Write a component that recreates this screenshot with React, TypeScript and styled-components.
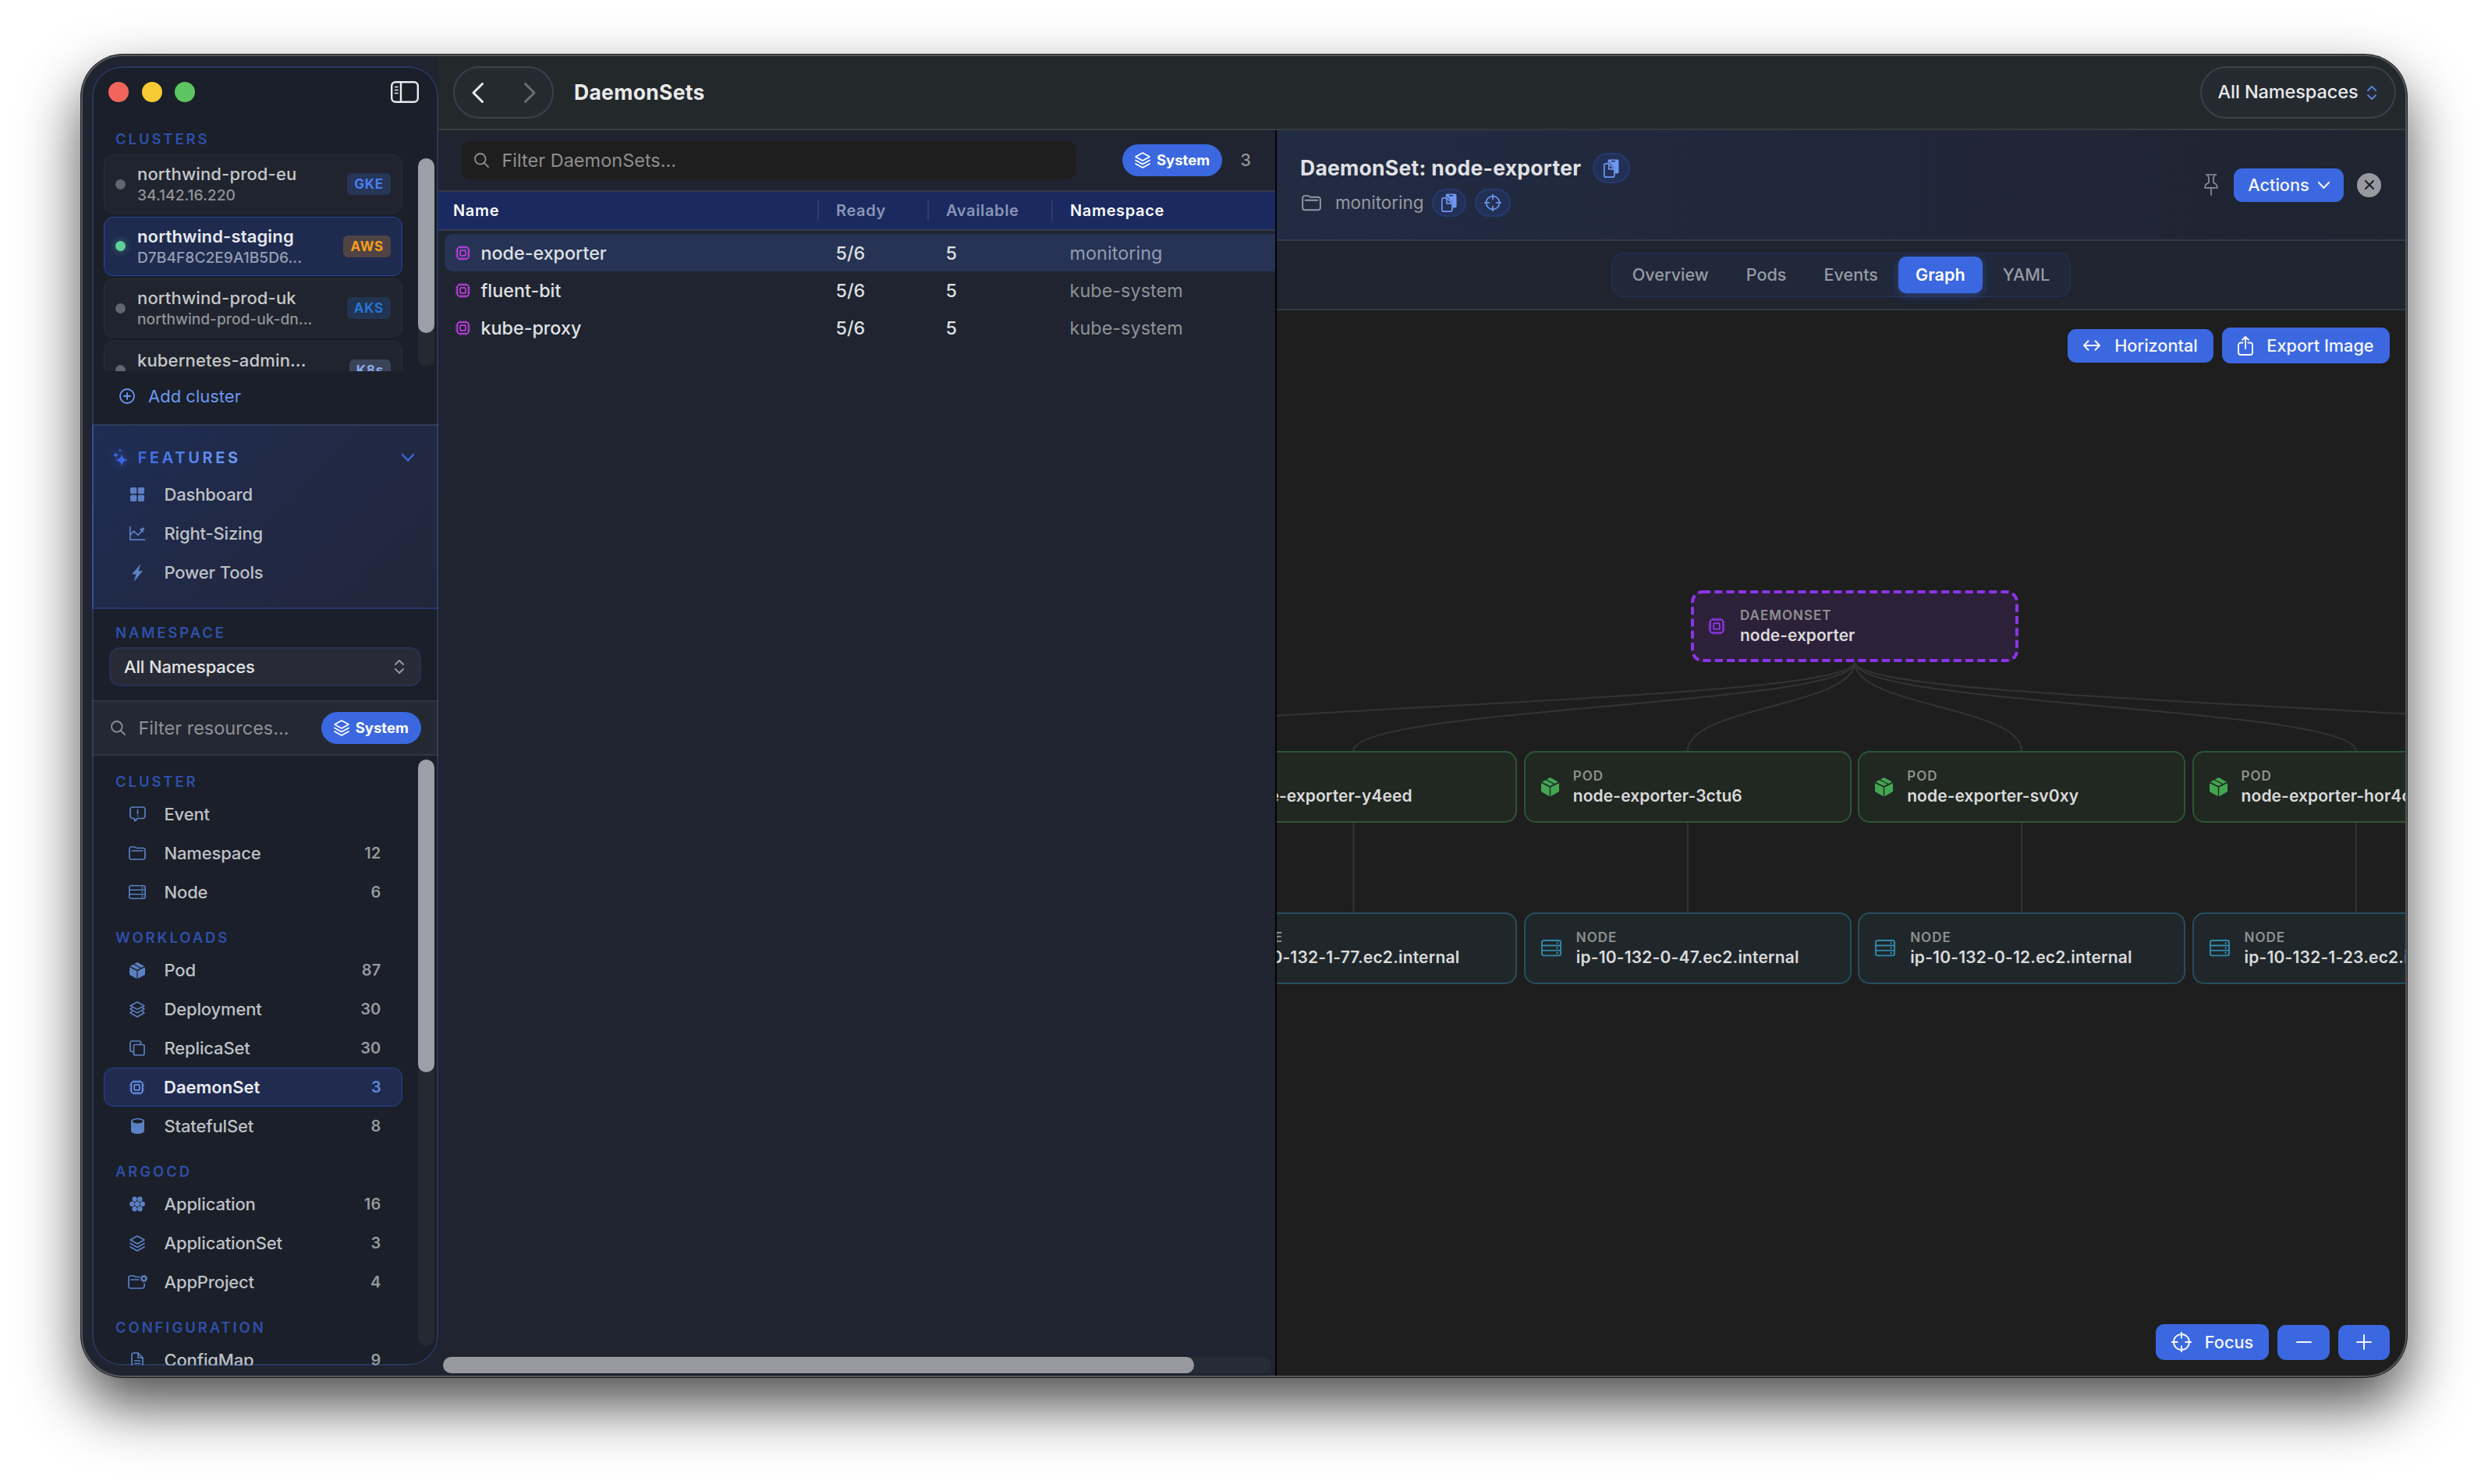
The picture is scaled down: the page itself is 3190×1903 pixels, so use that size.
import type { ReactNode } from 'react';
import styled, { createGlobalStyle, css } from 'styled-components';

const colors = {
  accent: '#3b68e0',
  accentSoft: '#6c97f0',
  sectionLabel: '#2f4fa8',
  sidebar: '#1a1f29',
  panel: '#1f2430',
  canvas: '#1e1e1e',
  sideIcon: '#5b80c4',
};

const GlobalStyle = createGlobalStyle`
  * {
    box-sizing: border-box;
  }

  body {
    margin: 0;
    background: #fff;
    font-family: Inter, 'Liberation Sans', sans-serif;
    font-size: 22px;
    font-weight: 500;
    line-height: 1.2;
    overflow: hidden;
  }

  svg {
    display: block;
    flex-shrink: 0;
    overflow: visible;
  }
`;

/* ---------- icons ---------- */

type IconProps = {
  w?: number,
  h?: number,
  box?: string,
  sw?: number,
  children?: ReactNode,
}

const Icon = ({ w = 20, h = 20, box = '0 0 20 20', sw = 1.7, children }: IconProps) => (
  <svg
    width={w}
    height={h}
    viewBox={box}
    fill="none"
    stroke="currentColor"
    strokeWidth={sw}
    strokeLinecap="round"
    strokeLinejoin="round"
  >
    {children}
  </svg>
);

const SidebarIcon = () => (
  <Icon w={36} h={28} box="0 0 36 28" sw={2.4}>
    <rect x="1.2" y="1.2" width="33.6" height="25.6" rx="5" />
    <path d="M13 1.5v25" />
    <path d="M5.5 7.5H9M5.5 11.5H9M5.5 15.5H9" strokeWidth="1.6" />
  </Icon>
);

const PlusCircleIcon = () => (
  <Icon sw={1.8}>
    <circle cx="10" cy="10" r="9" />
    <path d="M10 6v8M6 10h8" />
  </Icon>
);

const SparklesIcon = () => (
  <Icon w={20} h={24} box="0 0 20 24">
    <g fill="currentColor" stroke="none">
      <path d="M12 7c1 5 2.6 6.800 8 8-5.400 1.200-7 3-8 8-1-5-2.600-6.800-8-8 5.400-1.200 7-3 8-8z" />
      <path d="M4.500 4.500c.5 2.600 1.400 3.500 4 4-2.600.5-3.500 1.400-4 4-.5-2.600-1.400-3.500-4-4 2.600-.5 3.500-1.400 4-4z" />
      <path d="M10 0c.3 1.600.9 2.200 2.500 2.500-1.600.3-2.200.9-2.500 2.500-.3-1.600-.9-2.200-2.500-2.500 1.600-.3 2.200-.9 2.500-2.500z" />
    </g>
  </Icon>
);

const GridIcon = () => (
  <Icon w={18} h={18} box="0 0 18 18">
    <g fill="currentColor" stroke="none">
      <rect width="8.2" height="8.2" rx="1.8" />
      <rect x="9.8" width="8.2" height="8.2" rx="1.8" />
      <rect y="9.8" width="8.2" height="8.2" rx="1.8" />
      <rect x="9.8" y="9.8" width="8.2" height="8.2" rx="1.8" />
    </g>
  </Icon>
);

const ChartIcon = () => (
  <Icon w={20} h={18} box="0 0 20 18">
    <path d="M.8.8v16.4h18.7" />
    <path d="M1.5 10.5l4-4.3 5.5 5 5-5.2" />
    <path d="M13.5 3.8l5.3-2-1.8 5.5z" fill="currentColor" strokeWidth="1" />
  </Icon>
);

const BoltIcon = () => (
  <Icon w={14} h={21} box="0 0 14 21">
    <path d="M10.5.5L.8 12h5L3.6 20.5 13.3 8.500h-5z" fill="currentColor" strokeWidth=".8" />
  </Icon>
);

const EventIcon = () => (
  <Icon w={21} h={20} box="0 0 21 20">
    <path d="M4 1h13a3 3 0 013 3v8.500a3 3 0 01-3 3h-6.500L6.800 18.800 6.300 15.500H4a3 3 0 01-3-3V4a3 3 0 013-3z" />
    <path d="M10.500 4.500v5M10.500 12.300v.2" />
  </Icon>
);

const FolderIcon = ({ w = 22 }: { w?: number }) => (
  <Icon w={w} h={w * 18 / 22} box="0 0 22 18">
    <path d="M1 3.500A2.500 2.500 0 013.500 1h3.300c.8 0 1.200.2 1.700.7.500.5.900.8 1.700.8h8.300A2.500 2.500 0 0121 5v9.500a2.500 2.500 0 01-2.500 2.500h-15A2.500 2.500 0 011 14.500z" />
    <path d="M4 6h14" />
  </Icon>
);

const FolderGearIcon = () => (
  <Icon w={25} h={18} box="0 0 25 18">
    <path d="M15 2.500H10.200c-.8 0-1.200-.3-1.700-.8C8 1.200 7.600 1 6.800 1H3.500A2.500 2.500 0 001 3.500v11A2.500 2.500 0 003.500 17h15a2.500 2.500 0 002.500-2.500V11" />
    <path d="M4 6h10" />
    <circle cx="20.5" cy="4.5" r="2.7" strokeWidth="2" />
    <circle cx="20.5" cy="4.5" r="4.1" strokeWidth="1.2" strokeDasharray="1.6 1.6" strokeLinecap="butt" />
  </Icon>
);

const ServerIcon = ({ w = 22 }: { w?: number }) => (
  <Icon w={w} h={w * 18 / 22} box="0 0 22 18" sw={1.6}>
    <rect x=".8" y=".8" width="20.4" height="16.4" rx="2.2" />
    <path d="M1 6.3h20M1 11.7h20" />
    <path d="M17.5 3.600v.1M17.500 9v.1M17.500 14.400v.1" strokeWidth="2" />
  </Icon>
);

const CubeIcon = ({ w = 20 }: { w?: number }) => (
  <Icon w={w} h={w * 1.05} box="0 0 20 21">
    <g fill="currentColor" stroke="none">
      <path d="M0 6.200l9.400 4.700V21L1 16.400a2 2 0 01-1-1.700z" />
      <path d="M20 6.200l-9.400 4.700V21l8.400-4.600a2 2 0 001-1.700z" />
      <path d="M.9 4.900l3.800-2.100 9.200 4.700L10 9.500z" />
      <path d="M6 2.100L9 .4a2 2 0 012 0l8.100 4.500-3.900 2z" />
    </g>
  </Icon>
);

const StackIcon = () => (
  <Icon w={20} h={21} box="0 0 20 21" sw={1.6}>
    <path d="M10 1l9 4.700-9 4.700-9-4.700z" />
    <path d="M3.300 8.300L1 10l9 4.900 9-4.900-2.300-1.700" />
    <path d="M3.300 12.900L1 14.800 10 20l9-5.200-2.300-1.900" />
  </Icon>
);

const LayersIcon = () => (
  <Icon w={20} h={21} box="0 0 20 21">
    <path d="M10 1l9 5-9 5-9-5z" />
    <path d="M1 10.500l9 5 9-5" />
    <path d="M1 15l9 5 9-5" />
  </Icon>
);

const ReplicaIcon = () => (
  <Icon>
    <path d="M5.500 14.500H3a2 2 0 01-2-2V3a2 2 0 012-2h9.500a2 2 0 012 2v2.500" />
    <rect x="5.5" y="5.5" width="13.5" height="13.5" rx="2" />
  </Icon>
);

const ChipIcon = ({ w = 19 }: { w?: number }) => (
  <Icon w={w} h={w} sw={1.8}>
    <rect x="2.6" y="2.6" width="14.8" height="14.8" rx="2" />
    <rect x="6.5" y="6.5" width="7" height="7" rx=".5" />
    <path
      d="M5.800.3v2M8.600.3v2M11.400.3v2M14.200.3v2M5.800 17.700v2M8.600 17.700v2M11.400 17.700v2M14.200 17.700v2M.3 5.800h2M.3 8.600h2M.3 11.400h2M.3 14.200h2M17.700 5.800h2M17.700 8.600h2M17.700 11.400h2M17.700 14.200h2"
      strokeWidth="1.3"
      strokeLinecap="butt"
    />
  </Icon>
);

const CylinderIcon = () => (
  <Icon w={17} h={20} box="0 0 17 20">
    <path
      d="M8.500 0C13.200 0 17 1.600 17 4v12c0 2.400-3.800 4-8.500 4S0 18.400 0 16V4c0-2.400 3.800-4 8.500-4zm0 1.400C4.900 1.400 2 2.500 2 4s2.900 2.500 6.500 2.500S15 5.500 15 4s-2.900-2.600-6.500-2.600z"
      fill="currentColor"
      stroke="none"
    />
  </Icon>
);

const hexDots = [[6.6, 3.8], [13.4, 3.8], [3.3, 10], [10, 10], [16.7, 10], [6.6, 16.2], [13.4, 16.2]];

const HexDotsIcon = () => (
  <Icon>
    <g fill="currentColor" stroke="none">
      {hexDots.map(([x, y]) => <circle key={`${x}-${y}`} cx={x} cy={y} r="3.2" />)}
    </g>
  </Icon>
);

const FileIcon = () => (
  <Icon w={16} h={20} box="0 0 16 20">
    <path d="M1 3a2 2 0 012-2h6l6 6v10a2 2 0 01-2 2H3a2 2 0 01-2-2z" />
    <path d="M9 1v6h6M4.500 11h7M4.500 14.500h7" />
  </Icon>
);

const SearchIcon = () => (
  <Icon w={19} h={19} box="0 0 19 19" sw={1.8}>
    <circle cx="7.8" cy="7.8" r="6.8" />
    <path d="M12.800 12.800l5.200 5.200" />
  </Icon>
);

const UpDownIcon = () => (
  <Icon w={12} h={18} box="0 0 12 18" sw={1.8}>
    <path d="M1 6l5-5 5 5M1 12l5 5 5-5" />
  </Icon>
);

const ChevronDown = ({ w = 16, sw = 2.4 }: { w?: number, sw?: number }) => (
  <Icon w={w} h={w * .6} box="0 0 16 9.6" sw={sw}>
    <path d="M1 1l7 7.500L15 1" />
  </Icon>
);

const CopyIcon = () => (
  <Icon w={20} h={24} box="0 0 20 24">
    <path
      d="M7.500.5H17a2.500 2.500 0 012.500 2.500v13a2.500 2.500 0 01-2.500 2.500h-2.500v-6.500L8 4.500H5.500V2.500a2 2 0 012-2z"
      fill="currentColor"
      stroke="none"
    />
    <path d="M10.500 2.800h4" stroke="#233056" strokeWidth="1.5" />
    <path d="M3 5.800h3.800l7 7V21a2.200 2.200 0 01-2.200 2.200H3A2.200 2.200 0 01.8 21V8A2.200 2.200 0 013 5.800z" />
    <path d="M6.800 6v6.800h6.800" />
  </Icon>
);

const TargetIcon = ({ w = 22, sw = 1.7 }: { w?: number, sw?: number }) => (
  <Icon w={w} h={w} box="0 0 26 26" sw={sw * 26 / w}>
    <circle cx="13" cy="13" r="10" />
    <path d="M13 0v8.500M13 17.500V26M0 13h8.500M17.500 13H26" strokeLinecap="butt" />
  </Icon>
);

const PinIcon = () => (
  <Icon w={18} h={28} box="0 0 18 28">
    <path d="M2.500 1h13M4.500 1l1.600 4.500v5.700C3 12.300 1 14.500 1 17.800h16c0-3.300-2-5.500-5.100-6.600V5.500L13.500 1M9 18v9" />
  </Icon>
);

const ArrowsIcon = () => (
  <Icon w={22} h={14} box="0 0 22 14" sw={2}>
    <path d="M1 7h20M6.500 1.200L1 7l5.500 5.800M15.500 1.200L21 7l-5.500 5.800" />
  </Icon>
);

const ShareIcon = () => (
  <Icon w={20} h={25} box="0 0 20 25" sw={1.9}>
    <path d="M6.500 8.500H4a3 3 0 00-3 3V21a3 3 0 003 3h12a3 3 0 003-3v-9.500a3 3 0 00-3-3h-2.500M10 16V1M6 4.800L10 1l4 3.800" />
  </Icon>
);

/* ---------- window ---------- */

const Page = styled.div`
  width: 3190px;
  height: 1903px;
  padding: 70px 104px 137px;
`;

const Window = styled.div`
  display: flex;
  width: 2982px;
  height: 1696px;
  border: 2px solid #54575c;
  border-radius: 54px;
  background: #1f2430;
  box-shadow: 0 0 0 1px #1c1c1e, 0 36px 76px rgba(0, 0, 0, .7);
  overflow: hidden;
`;

const Sidebar = styled.aside`
  position: relative;
  display: flex;
  flex-direction: column;
  width: 444px;
  margin: 13px 0 13px 12px;
  border-radius: 38px;
  background: ${colors.sidebar};
  overflow: hidden;
  flex-shrink: 0;

  /* rim light over every section */
  &::after {
    content: '';
    position: absolute;
    inset: 0;
    border: 2px solid rgba(72, 108, 200, .32);
    border-radius: 38px;
    pointer-events: none;
  }
`;

const TitleRow = styled.div`
  display: flex;
  align-items: center;
  height: 64px;
  padding: 2px 25px 0 21px;
  gap: 16.5px;
  color: #e9eaec;
  flex-shrink: 0;

  svg {
    margin-left: auto;
  }
`;

const Light = styled.span<{ $color: string }>`
  width: 26px;
  height: 26px;
  border-radius: 50%;
  background: ${props => props.$color};
`;

const Label = styled.div<{ $top?: number, $h?: number }>`
  display: flex;
  align-items: center;
  height: ${props => props.$h ?? 50}px;
  padding: ${props => props.$top ?? 0}px 0 0 30px;
  color: ${colors.sectionLabel};
  font-size: 18.5px;
  font-weight: 600;
  letter-spacing: 2.9px;
  flex-shrink: 0;
`;

const Scroller = styled.div<{ $h?: number }>`
  display: flex;
  justify-content: space-between;
  padding: 0 5px 0 15px;
  min-height: 0;
  overflow: hidden;
  ${props => props.$h ? `height: ${props.$h}px; flex-shrink: 0;` : 'flex: 1;'}
`;

const ScrollTrack = styled.div<{ $h: number }>`
  width: 21px;
  height: ${props => props.$h}px;
  margin-top: 5px;
  border-radius: 11px;
  background: #252932;
`;

const ScrollThumb = styled.div<{ $h: number }>`
  height: ${props => props.$h}px;
  border-radius: 11px;
  background: #9c9fa5;
`;

const Stack = styled.div<{ $gap?: number }>`
  display: flex;
  flex-direction: column;
  gap: ${props => props.$gap ?? 0}px;
  width: 383px;
`;

const ClusterCard = styled.div<{ $active?: boolean }>`
  display: flex;
  align-items: center;
  height: 76px;
  padding: 0 14px;
  border: 1.5px solid ${props => props.$active ? '#28459a' : '#262d37'};
  border-radius: 12px;
  background: ${props => props.$active ? '#1e2b4e' : '#20242e'};
  color: ${props => props.$active ? '#e6e8ee' : '#c6c7ca'};
  flex-shrink: 0;
`;

const Dot = styled.span<{ $active?: boolean }>`
  width: 13px;
  height: 13px;
  margin-right: 15px;
  border-radius: 50%;
  background: ${props => props.$active ? '#5fd198' : '#62656e'};
  ${props => props.$active && css`
    box-shadow: 0 0 10px rgba(95, 209, 152, .5);
  `}
`;

const ClusterText = styled.div<{ $active?: boolean }>`
  flex: 1;
  padding-top: 2px;
  line-height: 27px;
  font-weight: ${props => props.$active ? 600 : 500};
  letter-spacing: .15px;

  small {
    display: block;
    color: ${props => props.$active ? '#959db2' : '#919398'};
    font-size: 19.2px;
    font-weight: 500;
    letter-spacing: 0;
  }
`;

const Badge = styled.span<{ $color: string, $bg: string }>`
  padding: 0 9px;
  border-radius: 6px;
  background: ${props => props.$bg};
  color: ${props => props.$color};
  font-size: 17px;
  font-weight: 700;
  line-height: 28px;
  letter-spacing: .8px;
`;

const AddCluster = styled.div`
  display: flex;
  align-items: center;
  height: 68px;
  padding: 0 0 4px 35px;
  gap: 17px;
  color: ${colors.accentSoft};
  font-weight: 400;
  flex-shrink: 0;
`;

const Features = styled.div`
  height: 237px;
  border-top: 2px solid #2f3a58;
  border-bottom: 2px solid #25376b;
  background: linear-gradient(135deg, #1e2d54 0%, #212842 60%, #21273a 100%);
  box-shadow: inset 2px 0 #2a4282;
  flex-shrink: 0;
`;

const FeaturesHeader = styled.div`
  display: flex;
  align-items: center;
  height: 63px;
  padding: 18px 31px 0 26px;
  color: ${colors.accent};

  svg:first-child {
    filter: drop-shadow(0 0 6px rgba(59, 104, 224, .7));
  }

  svg:last-child {
    margin-left: auto;
  }
`;

const FeaturesTitle = styled.span`
  margin-left: 12.5px;
  background: linear-gradient(90deg, #3b66df, #709bf4);
  background-clip: text;
  color: transparent;
  font-size: 20px;
  font-weight: 700;
  letter-spacing: 3.6px;
`;

const NavItem = styled.div<{ $active?: boolean, $inset?: boolean }>`
  display: flex;
  align-items: center;
  height: 50px;
  padding-right: ${props => props.$active ? 26 : 27.5}px;
  margin-left: ${props => props.$inset ? 15 : 0}px;
  color: ${props => props.$active ? '#e8eaf0' : '#bfc1c5'};
  font-weight: ${props => props.$active ? 600 : 500};
  letter-spacing: ${props => props.$active ? 0 : '-.15px'};
  flex-shrink: 0;

  ${props => props.$active && css`
    border: 1.5px solid #27438f;
    border-radius: 12px;
    background: #202b4f;
  `}
`;

const NavIcon = styled.span<{ $active?: boolean }>`
  display: flex;
  justify-content: center;
  width: ${props => props.$active ? 83.5 : 85}px;
  padding-right: 7px;
  padding-left: ${props => props.$active ? 7 : 8}px;
  color: ${props => props.$active ? '#6791e6' : colors.sideIcon};
  flex-shrink: 0;
`;

const NavText = styled.span`
  flex: 1;
  margin-left: -7.5px;
`;

const Count = styled.span<{ $active?: boolean }>`
  color: ${props => props.$active ? '#5c86dc' : '#97999f'};
  font-size: 20px;
  font-weight: 600;
  letter-spacing: .2px;
`;

const NamespaceBox = styled.div`
  height: 117px;
  flex-shrink: 0;
`;

const Select = styled.div`
  display: flex;
  align-items: center;
  justify-content: space-between;
  width: 400px;
  height: 50px;
  margin-left: 22px;
  padding: 0 20px 0 17px;
  border: 2px solid #253256;
  border-radius: 14px;
  background: #282b35;
  color: #e1e2e4;
  letter-spacing: -.15px;

  svg {
    color: #9b9da3;
  }
`;

const SideFilter = styled.div`
  display: flex;
  align-items: center;
  height: 71px;
  padding: 0 22px 0 24px;
  border-top: 2px solid #31353f;
  border-bottom: 2px solid #31353f;
  background: #242832;
  color: #8e9095;
  font-size: 23.5px;
  font-weight: 400;
  flex-shrink: 0;
`;

const Placeholder = styled.span`
  flex: 1;
  margin-left: 16.5px;
  padding-top: 2px;
`;

const SystemPill = styled.span`
  display: flex;
  align-items: center;
  justify-content: center;
  gap: 8px;
  width: 128.5px;
  height: 41px;
  border-radius: 21px;
  background: ${colors.accent};
  color: #fff;
  font-size: 18.5px;
  font-weight: 700;
`;

/* ---------- main area ---------- */

const Main = styled.main`
  display: flex;
  flex-direction: column;
  flex: 1;
  min-width: 0;
`;

const Toolbar = styled.div`
  display: flex;
  align-items: center;
  height: 95px;
  padding: 0 12px 0 19px;
  border-bottom: 2px solid #373b3e;
  background: #23282b;
  color: #e9eaeb;
  flex-shrink: 0;
`;

const GlassPill = styled.div<{ $w: number }>`
  display: flex;
  align-items: center;
  justify-content: center;
  width: ${props => props.$w}px;
  height: 67px;
  border: 2px solid #35434b;
  border-radius: 34px;
  background: #252a31;
  font-size: 23.5px;
  letter-spacing: -.1px;

  &:last-child {
    gap: 12px;
    margin-left: auto;
    padding-right: 2px;
  }

  &:last-child svg {
    color: #5a83da;
  }
`;

const NavArrows = styled.div`
  display: flex;
  gap: 52px;

  svg:last-child {
    color: #6a6d72;
  }
`;

const Title = styled.h1`
  margin: 0 0 0 26px;
  font-size: 26.5px;
  font-weight: 700;
  letter-spacing: .3px;
`;

const Body = styled.div`
  display: flex;
  flex: 1;
  min-height: 0;
`;

const ListPane = styled.section`
  display: flex;
  flex-direction: column;
  width: 1075px;
  border-right: 2px solid #030303;
  background: ${colors.panel};
  flex-shrink: 0;
`;

const FilterBar = styled.div`
  display: flex;
  align-items: center;
  height: 77px;
  padding: 0 31px 0 30px;
  color: #909296;
`;

const FilterInput = styled.div`
  display: flex;
  align-items: center;
  width: 789px;
  height: 49px;
  margin-right: 59px;
  padding-left: 16px;
  border-radius: 12px;
  background: #1e1e1e;
  color: #8d8e90;
  font-size: 23.5px;
  font-weight: 400;
`;

const Total = styled.span`
  margin-left: 23px;
`;

const columns = '141px 159px 1fr';

const TableHead = styled.div`
  display: grid;
  grid-template-columns: 486px ${columns};
  align-items: center;
  height: 52px;
  border-top: 2px solid #343a4c;
  border-bottom: 2px solid #343a4c;
  background: #1a2a60;
`;

const HeadCell = styled.div<{ $first?: boolean, $dim?: boolean }>`
  height: 26px;
  padding-left: ${props => props.$first ? 19 : 22}px;
  border-left: ${props => props.$first ? 'none' : '2px solid #2c3a6e'};
  color: ${props => props.$dim ? '#8b94b6' : '#f7f8fb'};
  font-size: 20px;
  font-weight: 600;
  line-height: 26px;
  letter-spacing: .65px;
`;

const TableBody = styled.div`
  flex: 1;
  padding: 4px 0 0 8px;
`;

const Row = styled.div<{ $active?: boolean }>`
  display: grid;
  grid-template-columns: 478px ${columns};
  align-items: center;
  height: 48.1px;
  padding-top: 1px;
  border-radius: 10px 0 0 10px;
  background: ${props => props.$active ? '#263355' : 'transparent'};
  color: #dfe0e3;
  font-size: 23.3px;

  > span {
    padding-left: 23.5px;
  }

  > span:last-child {
    color: ${props => props.$active ? '#959cb0' : '#8f9196'};
    font-weight: 400;
    letter-spacing: .1px;
  }
`;

const NameCell = styled.div`
  display: flex;
  align-items: center;
  gap: 14px;
  padding-left: 13.5px;

  svg {
    color: #bd3fdd;
  }
`;

const HTrack = styled.div`
  width: 1062px;
  height: 21px;
  margin: 0 0 3px 6px;
  border-radius: 11px;
  background: #272b36;
`;

const HThumb = styled.div`
  width: 963px;
  height: 21px;
  border-radius: 11px;
  background: #97999f;
`;

/* ---------- detail ---------- */

const Detail = styled.section`
  display: flex;
  flex-direction: column;
  flex: 1;
  min-width: 0;
`;

const DetailHead = styled.div`
  display: flex;
  align-items: center;
  height: 142px;
  padding: 0 31px 0 30px;
  border-bottom: 2px solid #343a49;
  background: linear-gradient(90deg, #212b42 0%, #21273b 50%, #1f2430 100%);
`;

const Heading = styled.div`
  display: flex;
  flex-direction: column;
  gap: 7px;
  flex: 1;
`;

const HeadingLine = styled.div`
  display: flex;
  align-items: center;
  color: #9599a3;
  font-weight: 400;

  h2 {
    margin: 0 15px 0 0;
    color: #e0e1e5;
    font-size: 26.5px;
    font-weight: 700;
    letter-spacing: .27px;
  }

  > svg {
    margin-left: 2px;
  }

  > span {
    margin: 0 11px 0 18px;
    font-size: 22.4px;
  }
`;

const MiniPill = styled.i<{ $w: number, $h: number }>`
  display: flex;
  align-items: center;
  justify-content: center;
  width: ${props => props.$w}px;
  height: ${props => props.$h}px;
  margin-right: 11px;
  border: 2px solid #263a70;
  border-radius: 20px;
  background: #233056;
  color: #6f98f0;
`;

const HeadActions = styled.div`
  display: flex;
  align-items: center;
  gap: 17px;
  color: #8c8f97;

  > svg {
    margin-right: 3px;
  }
`;

const Button = styled.button<{ $w: number, $h: number, $gap?: number }>`
  display: flex;
  align-items: center;
  justify-content: center;
  gap: ${props => props.$gap ?? 0}px;
  width: ${props => props.$w}px;
  height: ${props => props.$h}px;
  padding: 0;
  border: none;
  border-radius: 11px;
  background: ${colors.accent};
  color: #f4f6fd;
  font: inherit;
  font-size: 21.7px;
`;

const CloseButton = styled.span`
  display: flex;
  align-items: center;
  justify-content: center;
  width: 31px;
  height: 31px;
  border-radius: 50%;
  background: #97999e;
  color: #20242f;
`;

const TabBar = styled.div`
  display: flex;
  align-items: center;
  justify-content: center;
  height: 89px;
  border-bottom: 2px solid #333846;
  background: #20242f;
`;

const Tabs = styled.div`
  display: flex;
  gap: 4px;
  padding: 4px;
  border: 1.5px solid #233260;
  border-radius: 15px;
  background: #20283a;
`;

const Tab = styled.div<{ $active?: boolean }>`
  height: 47px;
  padding: 0 22px;
  border-radius: 10px;
  color: #969aa3;
  font-size: 21.6px;
  line-height: 47px;

  ${props => props.$active && css`
    background: ${colors.accent};
    box-shadow: 0 3px 12px rgba(59, 104, 224, .4);
    color: #fff;
    font-weight: 600;
  `}
`;

const Canvas = styled.div`
  position: relative;
  flex: 1;
  background: ${colors.canvas};
  overflow: hidden;
`;

const Edges = styled.svg`
  position: absolute;
  inset: 0;
`;

type NodeKind = 'daemonset' | 'pod' | 'node';

const kinds = {
  daemonset: { border: 'transparent', bg: '#2d2039', icon: '#8b35e6', label: 'DAEMONSET', gap: 19, spacing: 0 },
  pod: { border: '#2b5632', bg: '#212721', icon: '#43a653', label: 'POD', gap: 18, spacing: .08 },
  node: { border: '#264e5e', bg: '#20272a', icon: '#3189ab', label: 'NODE', gap: 19, spacing: .18 },
};

const GraphNode = styled.div<{ $kind: NodeKind }>`
  position: absolute;
  display: flex;
  align-items: center;
  gap: ${props => kinds[props.$kind].gap}px;
  width: 420px;
  height: 92px;
  padding-left: 20px;
  border: 2px solid ${props => kinds[props.$kind].border};
  border-radius: 15px;
  background: ${props => kinds[props.$kind].bg};
  color: #d9dadb;
  font-size: 21px;
  font-weight: 600;
  line-height: 26px;
  letter-spacing: ${props => kinds[props.$kind].spacing}px;
  white-space: nowrap;

  > svg {
    color: ${props => kinds[props.$kind].icon};
  }

  > div {
    padding-bottom: 2px;
  }

  small {
    display: block;
    color: #8e9090;
    font-size: 17px;
    letter-spacing: 1px;
  }
`;

const DashedFrame = styled.svg`
  position: absolute;
  left: -2px;
  top: -2px;
`;

const TopButtons = styled.div`
  position: absolute;
  top: 22px;
  right: 20px;
  display: flex;
  align-items: center;
  gap: 11px;
`;

const BottomButtons = styled(TopButtons)`
  top: auto;
  bottom: 20px;
`;

/* ---------- data ---------- */

const clusters = [
  { name: 'northwind-prod-eu', host: '34.142.16.220', badge: 'GKE', color: '#4a7ff0', bg: '#263558' },
  { name: 'northwind-staging', host: 'D7B4F8C2E9A1B5D6...', badge: 'AWS', color: '#f59e1f', bg: '#4f4443', active: true },
  { name: 'northwind-prod-uk', host: 'northwind-prod-uk-dn...', badge: 'AKS', color: '#2673d2', bg: '#213450' },
  { name: 'kubernetes-admin...', host: '', badge: 'K8s', color: '#8eabec', bg: '#3a4458' },
];

const features = [
  { name: 'Dashboard', icon: <GridIcon /> },
  { name: 'Right-Sizing', icon: <ChartIcon /> },
  { name: 'Power Tools', icon: <BoltIcon /> },
];

const groups = [
  {
    title: 'CLUSTER',
    items: [
      { name: 'Event', icon: <EventIcon /> },
      { name: 'Namespace', icon: <FolderIcon />, count: 12 },
      { name: 'Node', icon: <ServerIcon />, count: 6 },
    ],
  },
  {
    title: 'WORKLOADS',
    items: [
      { name: 'Pod', icon: <CubeIcon />, count: 87 },
      { name: 'Deployment', icon: <StackIcon />, count: 30 },
      { name: 'ReplicaSet', icon: <ReplicaIcon />, count: 30 },
      { name: 'DaemonSet', icon: <ChipIcon />, count: 3, active: true },
      { name: 'StatefulSet', icon: <CylinderIcon />, count: 8 },
    ],
  },
  {
    title: 'ARGOCD',
    items: [
      { name: 'Application', icon: <HexDotsIcon />, count: 16 },
      { name: 'ApplicationSet', icon: <LayersIcon />, count: 3 },
      { name: 'AppProject', icon: <FolderGearIcon />, count: 4 },
    ],
  },
  {
    title: 'CONFIGURATION',
    items: [
      { name: 'ConfigMap', icon: <FileIcon />, count: 9 },
    ],
  },
];

const daemonSets = [
  { name: 'node-exporter', ready: '5/6', available: 5, namespace: 'monitoring', active: true },
  { name: 'fluent-bit', ready: '5/6', available: 5, namespace: 'kube-system' },
  { name: 'kube-proxy', ready: '5/6', available: 5, namespace: 'kube-system' },
];

const tabs = ['Overview', 'Pods', 'Events', 'Graph', 'YAML'];

// canvas x of the root's centre and the distance between two pods
const ROOT_X = 741;
const STEP = 428.4;

const pods = [
  { pod: 'node-exporter-y4eed', node: 'ip-10-132-1-77.ec2.internal', slot: -1.5 },
  { pod: 'node-exporter-3ctu6', node: 'ip-10-132-0-47.ec2.internal', slot: -.5 },
  { pod: 'node-exporter-sv0xy', node: 'ip-10-132-0-12.ec2.internal', slot: .5 },
  { pod: 'node-exporter-hor4c', node: 'ip-10-132-1-23.ec2.internal', slot: 1.5 },
];
const slots = [-2.5, -1.5, -.5, .5, 1.5, 2.5];

const nodeIcons = {
  daemonset: <ChipIcon w={22} />,
  pod: <CubeIcon w={23} />,
  node: <ServerIcon w={26} />,
};

const GraphCard = ({ kind, name, x, y }: { kind: NodeKind, name: string, x: number, y: number }) => (
  <GraphNode $kind={kind} style={{ left: x - 210, top: y }}>
    {kind === 'daemonset' && (
      <DashedFrame width="420" height="92">
        <rect
          x="2"
          y="2"
          width="416"
          height="88"
          rx="13"
          fill="none"
          stroke="#8b35e6"
          strokeWidth="4"
          strokeDasharray="10 5.3"
        />
      </DashedFrame>
    )}
    {nodeIcons[kind]}
    <div>
      <small>{kinds[kind].label}</small>
      {name}
    </div>
  </GraphNode>
);

const System = () => (
  <SystemPill>
    <LayersIcon />
    System
  </SystemPill>
);

const SidePanel = () => (
  <Sidebar>
    <TitleRow>
      <Light $color="#f2655c" />
      <Light $color="#f5ca33" />
      <Light $color="#5cc560" />
      <SidebarIcon />
    </TitleRow>

    <Label $h={49} $top={10}>CLUSTERS</Label>
    <Scroller $h={278}>
      <Stack $gap={3.6}>
        {clusters.map(item => (
          <ClusterCard key={item.name} $active={item.active}>
            <Dot $active={item.active} />
            <ClusterText $active={item.active}>
              {item.name}
              <small>{item.host || '\u00a0'}</small>
            </ClusterText>
            <Badge $color={item.color} $bg={item.bg}>{item.badge}</Badge>
          </ClusterCard>
        ))}
      </Stack>
      <ScrollTrack $h={267}>
        <ScrollThumb $h={224} />
      </ScrollTrack>
    </Scroller>
    <AddCluster>
      <PlusCircleIcon />
      Add cluster
    </AddCluster>

    <Features>
      <FeaturesHeader>
        <SparklesIcon />
        <FeaturesTitle>FEATURES</FeaturesTitle>
        <ChevronDown />
      </FeaturesHeader>
      {features.map(item => (
        <NavItem key={item.name} $inset>
          <NavIcon>{item.icon}</NavIcon>
          <NavText>{item.name}</NavText>
        </NavItem>
      ))}
    </Features>

    <NamespaceBox>
      <Label $h={49} $top={12}>NAMESPACE</Label>
      <Select>
        All Namespaces
        <UpDownIcon />
      </Select>
    </NamespaceBox>

    <SideFilter>
      <SearchIcon />
      <Placeholder>Filter resources...</Placeholder>
      <System />
    </SideFilter>

    <Scroller>
      <Stack>
        {groups.map(group => [
          <Label key={group.title} $top={17} style={{ marginLeft: -15 }}>{group.title}</Label>,
          ...group.items.map(item => (
            <NavItem key={item.name} $active={item.active}>
              <NavIcon $active={item.active}>{item.icon}</NavIcon>
              <NavText>{item.name}</NavText>
              {item.count && <Count $active={item.active}>{item.count}</Count>}
            </NavItem>
          )),
        ])}
      </Stack>
      <ScrollTrack $h={752}>
        <ScrollThumb $h={401} />
      </ScrollTrack>
    </Scroller>
  </Sidebar>
);

const List = () => (
  <ListPane>
    <FilterBar>
      <FilterInput>
        <SearchIcon />
        <Placeholder>Filter DaemonSets...</Placeholder>
      </FilterInput>
      <System />
      <Total>3</Total>
    </FilterBar>
    <TableHead>
      <HeadCell $first>Name</HeadCell>
      <HeadCell $dim>Ready</HeadCell>
      <HeadCell $dim>Available</HeadCell>
      <HeadCell>Namespace</HeadCell>
    </TableHead>
    <TableBody>
      {daemonSets.map(row => (
        <Row key={row.name} $active={row.active}>
          <NameCell>
            <ChipIcon />
            {row.name}
          </NameCell>
          <span>{row.ready}</span>
          <span>{row.available}</span>
          <span>{row.namespace}</span>
        </Row>
      ))}
    </TableBody>
    <HTrack>
      <HThumb />
    </HTrack>
  </ListPane>
);

const Graph = () => (
  <Canvas>
    <Edges width="1447" height="1366" fill="none" stroke="#343434" strokeWidth="2">
      {slots.map(slot => {
        const x = ROOT_X + slot * STEP;
        return (
          <path
            key={slot}
            d={`M${ROOT_X} 451C${ROOT_X} 508 ${x} 508 ${x} 565M${x} 657V772`}
          />
        );
      })}
    </Edges>
    <GraphCard kind="daemonset" name="node-exporter" x={ROOT_X} y={359} />
    {pods.map(item => (
      <GraphCard key={item.pod} kind="pod" name={item.pod} x={ROOT_X + item.slot * STEP} y={565} />
    ))}
    {pods.map(item => (
      <GraphCard key={item.node} kind="node" name={item.node} x={ROOT_X + item.slot * STEP} y={771.5} />
    ))}
    <TopButtons>
      <Button $w={187} $h={43} $gap={18}>
        <ArrowsIcon />
        Horizontal
      </Button>
      <Button $w={215} $h={46} $gap={17}>
        <ShareIcon />
        Export Image
      </Button>
    </TopButtons>
    <BottomButtons>
      <Button $w={145} $h={46} $gap={17}>
        <TargetIcon w={26} sw={1.9} />
        Focus
      </Button>
      <Button $w={67} $h={45}>
        <Icon w={18} h={18} box="0 0 18 18" sw={2}><path d="M0 9h18" /></Icon>
      </Button>
      <Button $w={66} $h={45}>
        <Icon w={18} h={18} box="0 0 18 18" sw={2}><path d="M0 9h18M9 0v18" /></Icon>
      </Button>
    </BottomButtons>
  </Canvas>
);

const App = () => (
  <Page>
    <GlobalStyle />
    <Window>
      <SidePanel />
      <Main>
        <Toolbar>
          <GlassPill $w={129}>
            <NavArrows>
              <Icon w={15} h={26} box="0 0 15 26" sw={3}><path d="M13.500 1.500L2 13l11.500 11.500" /></Icon>
              <Icon w={15} h={26} box="0 0 15 26" sw={3}><path d="M1.500 1.500L13 13 1.500 24.500" /></Icon>
            </NavArrows>
          </GlassPill>
          <Title>DaemonSets</Title>
          <GlassPill $w={251}>
            All Namespaces
            <UpDownIcon />
          </GlassPill>
        </Toolbar>
        <Body>
          <List />
          <Detail>
            <DetailHead>
              <Heading>
                <HeadingLine>
                  <h2>DaemonSet: node-exporter</h2>
                  <MiniPill $w={48} $h={39}><CopyIcon /></MiniPill>
                </HeadingLine>
                <HeadingLine>
                  <FolderIcon w={25} />
                  <span>monitoring</span>
                  <MiniPill $w={44} $h={36}><CopyIcon /></MiniPill>
                  <MiniPill $w={46} $h={36}><TargetIcon /></MiniPill>
                </HeadingLine>
              </Heading>
              <HeadActions>
                <PinIcon />
                <Button $w={141} $h={43} $gap={11}>
                  Actions
                  <ChevronDown w={15} sw={2.2} />
                </Button>
                <CloseButton>
                  <Icon w={12} h={12} box="0 0 12 12" sw={2.2}><path d="M1 1l10 10M11 1L1 11" /></Icon>
                </CloseButton>
              </HeadActions>
            </DetailHead>
            <TabBar>
              <Tabs>
                {tabs.map(tab => <Tab key={tab} $active={tab === 'Graph'}>{tab}</Tab>)}
              </Tabs>
            </TabBar>
            <Graph />
          </Detail>
        </Body>
      </Main>
    </Window>
  </Page>
);

export default App;
